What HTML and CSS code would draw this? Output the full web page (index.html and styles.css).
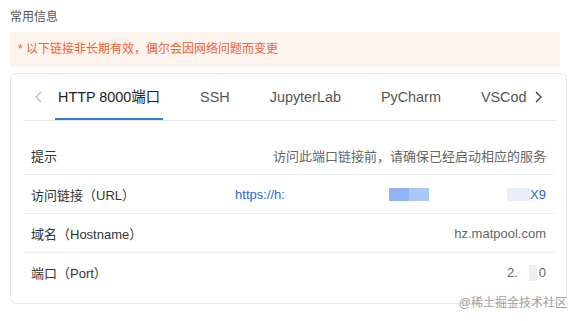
FILE: index.html
```html
<!DOCTYPE html>
<html lang="zh-CN">
<head>
<meta charset="utf-8">
<title>常用信息</title>
<link rel="stylesheet" href="styles.css">
</head>
<body>
<div class="page">
  <div class="title">常用信息</div>
  <div class="warning">* 以下链接非长期有效，偶尔会因网络问题而变更</div>
  <div class="card">
    <div class="tabbar">
      <div class="nav prev">
        <svg width="7" height="12" viewBox="0 0 7 12"><polyline points="6,1 1,6 6,11" fill="none" stroke="#b8b8b8" stroke-width="1.2"/></svg>
      </div>
      <div class="scroll">
        <div class="tab active">HTTP 8000端口</div>
        <div class="tab">SSH</div>
        <div class="tab">JupyterLab</div>
        <div class="tab">PyCharm</div>
        <div class="tab">VSCode</div>
      </div>
      <div class="nav next">
        <svg width="7" height="12" viewBox="0 0 7 12"><polyline points="1,1 6,6 1,11" fill="none" stroke="#444" stroke-width="1.3"/></svg>
      </div>
    </div>
    <div class="rows">
      <div class="row">
        <span class="label">提示</span>
        <span class="value">访问此端口链接前，请确保已经启动相应的服务</span>
      </div>
      <div class="row">
        <span class="label">访问链接（URL）</span>
        <span class="value link"><span class="url-start">https://h:</span><span class="blur-a"></span><span class="blur-b"></span><span class="gap"></span><span class="blur-c"></span>X9</span>
      </div>
      <div class="row">
        <span class="label">域名（Hostname）</span>
        <span class="value">hz.matpool.com</span>
      </div>
      <div class="row">
        <span class="label">端口（Port）</span>
        <span class="value">2.<span class="blur-d"></span>0</span>
      </div>
    </div>
  </div>
  <div class="watermark">@稀土掘金技术社区</div>
</div>
</body>
</html>
```
FILE: styles.css
```css
* { box-sizing: border-box; }
html, body { margin: 0; padding: 0; background: #fff; }
body {
  font-family: "Liberation Sans", "Noto Sans CJK SC", sans-serif;
  width: 578px;
  height: 321px;
  overflow: hidden;
}
.page {
  position: relative;
  padding: 9px 11px 0 10px;
  height: 321px;
}
.title {
  font-size: 12px;
  line-height: 17px;
  color: #555;
}
.warning {
  margin-top: 6px;
  margin-right: 7px;
  height: 35px;
  line-height: 35px;
  padding-left: 8px;
  background: #fdf4ee;
  color: #f2613a;
  font-size: 12px;
}
.card {
  margin-top: 6px;
  height: 231px;
  border: 1px solid #e6e8eb;
  border-radius: 6px;
  padding: 0 11px 0 12px;
}
.tabbar {
  display: flex;
  height: 47px;
  border-bottom: 1px solid #e4e7ed;
}
.nav {
  display: flex;
  align-items: center;
  flex: none;
}
.prev { width: 32px; padding-left: 12px; }
.next { width: 28px; padding-left: 8px; }
.scroll {
  flex: 1;
  display: flex;
  overflow: hidden;
  padding-left: 3px;
  white-space: nowrap;
}
.tab {
  position: relative;
  flex: none;
  margin-right: 40px;
  font-size: 14.4px;
  line-height: 46px;
  color: #555;
}
.tab.active { color: #222; }
.tab.active::after {
  content: "";
  position: absolute;
  left: -3px;
  right: -3px;
  bottom: -1px;
  height: 3px;
  background: #3a76d6;
}
.rows { margin-top: 15px; }
.row {
  display: flex;
  justify-content: space-between;
  align-items: center;
  height: 39px;
  padding: 0 9px 0 8px;
  border-bottom: 1px solid #ebeef2;
  font-size: 13px;
}
.row:last-child { border-bottom: none; }
.label { color: #333; }
.value { color: #666; display: flex; align-items: center; }
.link { color: #2170dc; }
.url-start { width: 57px; overflow: hidden; white-space: nowrap; }
.blur-a { display: inline-block; width: 97px; height: 0; }
.blur-b {
  display: inline-block;
  width: 40px;
  height: 13px;
  background: linear-gradient(to right, #8fb3f4 0, #8fb3f4 20px, #a9c7f8 20px);
}
.gap { display: inline-block; width: 78px; }
.blur-c {
  display: inline-block;
  width: 23px;
  height: 13px;
  background: #e9eefc;
}
.blur-d {
  display: inline-block;
  width: 8px;
  height: 16px;
  margin: 0 2px 0 11px;
  background: #eeeeee;
}
.watermark {
  position: absolute;
  right: 11px;
  top: 295px;
  font-size: 12px;
  line-height: 16px;
  color: #a0a0a0;
}
```
